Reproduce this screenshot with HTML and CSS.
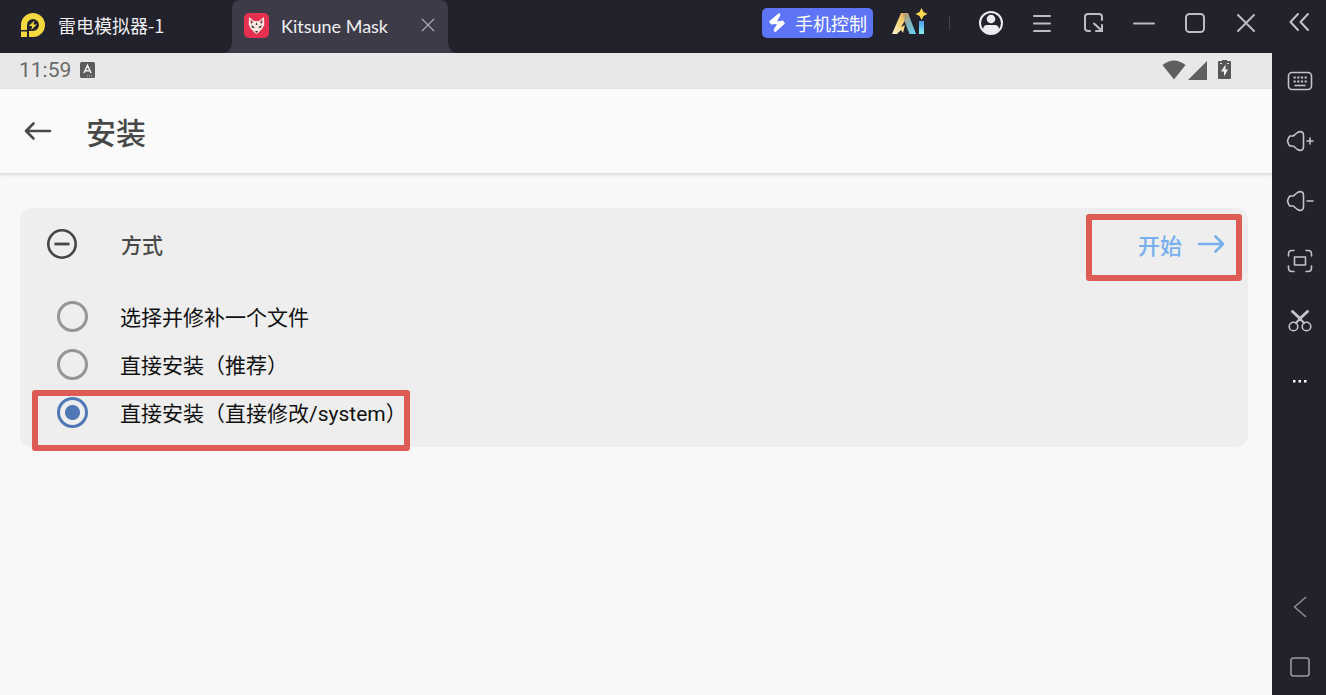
FILE: index.html
```html
<!DOCTYPE html>
<html lang="zh-CN">
<head>
  <meta charset="UTF-8">
  <meta name="viewport" content="width=device-width, initial-scale=1.0">
  <title>雷电模拟器-1</title>
  <link rel="stylesheet" href="styles.css">
</head>
<body>

<div class="window">
  <header class="titlebar">
    <div class="brand">
      <svg width="25" height="25" viewBox="0 0 25 25">
        <path d="M1 17V12A12 12 0 1 1 13 24H9V18H13A6 6 0 1 0 7 12V17Z" fill="#f5d93f"/>
        <path d="M1 18.5H7V24H1Z" fill="#f5d93f"/>
        <path d="M14.5 7.5L8.8 13H12.2L11.2 17L16.8 11.4H13.3Z" fill="#f5d93f"/>
      </svg>
      <span>雷电模拟器-1</span>
    </div>
    <div class="tab">
      <svg width="25" height="25" viewBox="0 0 25 25">
        <rect width="25" height="25" rx="5" fill="#e5304f"/>
        <path d="M5 4L10 8H15L20 4L20.300 12L18 16L14 20L12.500 21L11 20L7 16L4.700 12Z" fill="#f8e6df"/>
        <path d="M6.500 6.500L9 9L7 11ZM18.500 6.500L16 9L18 11Z" fill="#773342"/>
        <path d="M7 12L11 14.500L8.500 15ZM18 12L14 14.500L16.500 15ZM11 18H14L12.500 20ZM12.500 9L11.700 12H13.300Z" fill="#33222c"/>
      </svg>
      <span class="tab-name">Kitsune Mask</span>
      <button type="button" class="tab-close" aria-label="关闭标签">
        <svg width="14" height="14" viewBox="0 0 14 14"><path d="M1 1L13 13M13 1L1 13" stroke="#a9a8b0" stroke-width="1.200"/></svg>
      </button>
    </div>
    <div class="tools">
      <button type="button" class="phone">
        <svg width="18" height="22" viewBox="0 0 18 22"><path d="M11 1L1 9.500L3 12.500L9 12L5.500 18L7 20.500L17 11.500L15 8.500L9 9.500L12.500 3Z" fill="#fff"/></svg>
        手机控制
      </button>
      <button type="button" class="ai" aria-label="AI">
        <svg width="38" height="28" viewBox="0 0 38 28">
          <defs>
            <linearGradient id="warm" x1="0" y1="1" x2="1" y2="0"><stop offset="0" stop-color="#fff5da"/><stop offset=".5" stop-color="#f6d577"/><stop offset="1" stop-color="#d99b59"/></linearGradient>
            <linearGradient id="cool" x1="0" y1="0" x2="1" y2="1"><stop offset="0" stop-color="#d49a5e"/><stop offset=".5" stop-color="#7cb4bd"/><stop offset="1" stop-color="#68d9f5"/></linearGradient>
            <linearGradient id="bar" x1="0" y1="0" x2="0" y2="1"><stop offset="0" stop-color="#4a9cf0"/><stop offset="1" stop-color="#8af0e8"/></linearGradient>
          </defs>
          <path d="M10 5H17L19 12L15 11L10 19L14 17L12 25L10 22L6 26H1Z" fill="url(#warm)"/>
          <path d="M12 5H17L25 26H18.500L13 12Z" fill="url(#cool)"/>
          <rect x="28" y="13" width="5" height="13" fill="url(#bar)"/>
          <path d="M30.500 0L32.500 4L36.500 6L32.500 8L30.500 12L28.500 8L24.500 6L28.500 4Z" fill="#ffd84d"/>
        </svg>
      </button>
      <span class="divider"></span>
      <button type="button" class="win" aria-label="账号">
        <svg width="26" height="26" viewBox="0 0 26 26"><circle cx="13" cy="13" r="11" stroke="#ececf0"/><g fill="#ececf0" stroke="none"><circle cx="13" cy="9" r="4.300"/><path d="M5 20Q5 15 9 15H17Q21 15 21 20Q18 23.500 13 23.500Q8 23.500 5 20Z"/></g></svg>
      </button>
      <button type="button" class="win" aria-label="菜单">
        <svg width="20" height="20" viewBox="0 0 20 20"><path d="M2 3H18M2 10.500H18M2 18H18"/></svg>
      </button>
      <button type="button" class="win" aria-label="小窗">
        <svg width="22" height="22" viewBox="0 0 22 22"><path d="M8 19H6Q3 19 3 16V5Q3 2 6 2H17Q20 2 20 5V8M12 11.500L19 18M20 13V19H14"/></svg>
      </button>
      <button type="button" class="win" aria-label="最小化">
        <svg width="24" height="24" viewBox="0 0 24 24"><path d="M2 12.500H22"/></svg>
      </button>
      <button type="button" class="win" aria-label="最大化">
        <svg width="22" height="22" viewBox="0 0 22 22"><rect x="2" y="2" width="18" height="18" rx="3.500"/></svg>
      </button>
      <button type="button" class="win" aria-label="关闭">
        <svg width="20" height="20" viewBox="0 0 20 20"><path d="M2 2L18 18M18 2L2 18"/></svg>
      </button>
    </div>
  </header>

  <main class="screen">
    <div class="status">
      <span class="clock">11:59</span>
      <svg width="16" height="16" viewBox="0 0 16 16">
        <rect x="1" width="15" height="16" rx="1.500" fill="#5c5c5c"/>
        <path d="M5 11L8.500 3.500L12 11M6.300 8.700H10.700" fill="none" stroke="#eee" stroke-width="1.600"/>
        <path d="M8 14H14" stroke="#bbb" stroke-dasharray="1 1"/>
      </svg>
      <div class="signals">
        <svg width="24" height="20" viewBox="0 0 24 20"><path d="M0.500 5Q12 -4 23.500 5L12 19.500Z" fill="#5f5f5f"/></svg>
        <svg width="20" height="20" viewBox="0 0 20 20"><path d="M0 20L19 1V20Z" fill="#5f5f5f"/></svg>
        <svg class="battery" width="13" height="20" viewBox="0 0 13 20"><path d="M4 0H9V1H12Q13 1 13 2V18Q13 19 12 19H1Q0 19 0 18V2Q0 1 1 1H4Z" fill="#565656"/><path d="M7.500 4.500L3 11.500H6V16.500L10 9.500H7.500Z" fill="#efefef"/><path d="M2 3.500H4M9 3.500H11" stroke="#ddd"/></svg>
      </div>
    </div>

    <div class="appbar">
      <button type="button" class="back" aria-label="返回">
        <svg width="28" height="20" viewBox="0 0 28 20"><path d="M26 10H2M9.500 2.500L2 10L9.500 17.500" fill="none" stroke="#4a4a4a" stroke-width="2.600" stroke-linecap="round" stroke-linejoin="round"/></svg>
      </button>
      <h1>安装</h1>
    </div>

    <form class="card">
      <div class="card-head">
        <svg width="32" height="32" viewBox="0 0 32 32"><circle cx="16" cy="16" r="13.700" fill="none" stroke="#454545" stroke-width="2.600"/><path d="M8.500 16H23.500" stroke="#454545" stroke-width="2.800"/></svg>
        <h2>方式</h2>
        <button type="button" class="start">
          开始
          <svg width="28" height="20" viewBox="0 0 28 20"><path d="M2 10H26M18.500 2.500L26 10L18.500 17.500" fill="none" stroke="#76aeee" stroke-width="2.600" stroke-linecap="round" stroke-linejoin="round"/></svg>
        </button>
        <span class="mark mark-start"></span>
      </div>
      <div class="options">
        <label class="option"><input type="radio" name="method">选择并修补一个文件</label>
        <label class="option"><input type="radio" name="method">直接安装（推荐）</label>
        <label class="option"><input type="radio" name="method" checked>直接安装（直接修改/system）<span class="mark mark-option"></span></label>
      </div>
    </form>
  </main>
</div>

<aside class="sidebar">
  <button type="button" class="collapse" aria-label="收起">
    <svg width="22" height="20" viewBox="0 0 22 20"><path d="M9 2L1.500 10L9 18M19 2L11.500 10L19 18" stroke-width="2"/></svg>
  </button>
  <button type="button" aria-label="键盘">
    <svg width="26" height="20" viewBox="0 0 26 20"><rect x="1.500" y="1.500" width="23" height="17" rx="3.500"/><path d="M6.500 6.500H20M6.500 10.500H20" stroke-width="2.200" stroke-dasharray="2.200 1.500" stroke-linecap="butt"/><path d="M8 14.500H18"/></svg>
  </button>
  <button type="button" aria-label="音量加">
    <svg width="28" height="22" viewBox="0 0 28 22"><path d="M4 6H6.500Q8 6 9 4.500L11.500 2.500Q14 1 16 2Q17.500 3 17.500 5V17Q17.500 19 16 20Q14 21 11.500 19.500L9 17.500Q8 16 6.500 16H4Q2.500 15 1.500 11Q2.500 7 4 6ZM21 11H27M24 8V14"/></svg>
  </button>
  <button type="button" aria-label="音量减">
    <svg width="28" height="22" viewBox="0 0 28 22"><path d="M4 6H6.500Q8 6 9 4.500L11.500 2.500Q14 1 16 2Q17.500 3 17.500 5V17Q17.500 19 16 20Q14 21 11.500 19.500L9 17.500Q8 16 6.500 16H4Q2.500 15 1.500 11Q2.500 7 4 6ZM21 11H27"/></svg>
  </button>
  <button type="button" aria-label="全屏">
    <svg width="26" height="24" viewBox="0 0 26 24"><path d="M1.500 7V5Q1.500 1.500 5 1.500H7M19 1.500H21Q24.500 1.500 24.500 5V7M24.500 17V19Q24.500 22.500 21 22.500H19M7 22.500H5Q1.500 22.500 1.500 19V17"/><rect x="7.500" y="8" width="11" height="8"/></svg>
  </button>
  <button type="button" aria-label="截图">
    <svg width="24" height="24" viewBox="0 0 24 24"><path d="M4.500 2.500L12 9.500M19.500 2.500L12 9.500" stroke-width="3"/><path d="M12 9.500L16 14M12 9.500L8 14" stroke-width="2"/><circle cx="5.500" cy="17.500" r="4.300"/><circle cx="18.500" cy="17.500" r="4.300"/></svg>
  </button>
  <button type="button" aria-label="更多">
    <svg width="14" height="4" viewBox="0 0 14 4"><path d="M0 1H2.500V3.500H0ZM5.500 1H8V3.500H5.500ZM11 1H13.500V3.500H11Z" fill="#fff" stroke="none"/></svg>
  </button>
  <button type="button" class="nav" aria-label="后退">
    <svg width="14" height="22" viewBox="0 0 14 22"><path d="M12.500 1.500L1.500 11L12.500 20.500" stroke="#8e8d96"/></svg>
  </button>
  <button type="button" aria-label="任务">
    <svg width="20" height="20" viewBox="0 0 20 20"><rect x="1" y="1" width="18" height="18" rx="2.500" stroke="#9a99a2"/></svg>
  </button>
</aside>

</body>
</html>
```
FILE: styles.css
```css
* { box-sizing: border-box; }
body {
  margin: 0;
  min-height: 100vh;
  display: flex;
  background: #22222d;
  font-family: Roboto, "Noto Sans CJK SC", sans-serif;
}
button { padding: 0; border: none; background: none; font-family: inherit; cursor: pointer; }
svg { display: block; flex: none; }
h1, h2 { margin: 0; font-weight: 500; color: #484848; }

.window { flex: 1; display: flex; flex-direction: column; }

/* title bar */
.titlebar { height: 53px; display: flex; color: #f0f0f3; }
.brand {
  width: 232px;
  padding: 0 0 3px 20px;
  display: flex;
  align-items: center;
  gap: 13px;
  font-family: "Noto Sans CJK SC", sans-serif;
  font-size: 18px;
}
.tab {
  position: relative;
  width: 216px;
  padding: 0 13px 3px 12px;
  display: flex;
  align-items: center;
  background: #3c3b47;
  border-radius: 8px 8px 0 0;
}
.tab::before, .tab::after {
  content: "";
  position: absolute;
  bottom: 0;
  width: 8px;
  height: 12px;
}
.tab::before { right: 100%; background: radial-gradient(ellipse 8px 12px at 0 0, transparent 98%, #3c3b47); }
.tab::after { left: 100%; background: radial-gradient(ellipse 8px 12px at 100% 0, transparent 98%, #3c3b47); }
.tab-name { margin-left: 12px; padding-top: 2px; font-family: Lato, sans-serif; font-size: 18px; }
.tab-close { margin-left: auto; }
.tools { height: 45px; margin-left: auto; padding-right: 1px; display: flex; align-items: center; }
.phone {
  height: 30px;
  padding: 0 6px;
  display: flex;
  align-items: center;
  gap: 9px;
  border-radius: 5px;
  background: #5c74f5;
  color: #fff;
  font-size: 18px;
}
.ai { margin-left: 18px; padding-bottom: 2px; }
.divider { width: 1px; height: 14px; margin: 0 15px 0 20px; background: #44434f; }
.win { width: 51px; height: 45px; display: flex; align-items: center; justify-content: center; }
.win svg { fill: none; stroke: #bdbcc3; stroke-width: 2; stroke-linecap: round; }

/* android screen */
.screen { flex: 1; background: #f8f8f8; }
.status { height: 36px; padding: 0 41px 2px 19px; display: flex; align-items: center; gap: 8px; background: #e8e8e8; }
.clock { font-size: 21px; color: #6a6a6a; }
.signals { margin-left: auto; display: flex; gap: 2px; }
.battery { margin-left: 8px; }
.appbar {
  height: 85px;
  padding: 0 0 1px 24px;
  display: flex;
  align-items: center;
  gap: 34px;
  background: #fafafa;
  border-bottom: 1px solid #dedede;
  box-shadow: 0 1px 3px rgba(0, 0, 0, 0.12);
}
.appbar h1 { font-size: 30px; }

.card { margin: 34px 24px 0 20px; padding-bottom: 11px; background: #eeeeee; border-radius: 12px; }
.card-head { position: relative; height: 74px; padding: 0 23px 2px 26px; display: flex; align-items: center; }
.card-head h2 { margin-left: 43px; font-size: 21px; }
.start { margin-left: auto; display: flex; align-items: center; gap: 15px; font-size: 22px; font-weight: 500; color: #76aeee; }
.options { padding-top: 10px; }
.option {
  position: relative;
  height: 48px;
  padding-left: 37px;
  display: flex;
  align-items: center;
  font-size: 21px;
  color: #111;
}
.option input {
  appearance: none;
  width: 31px;
  height: 31px;
  margin: 0 32px 0 0;
  border: 3px solid #969696;
  border-radius: 50%;
}
.option input:checked { border-color: #4f78b4; background: radial-gradient(circle, #4f78b4 7px, transparent 8px); }

/* red frames */
.mark { position: absolute; border: 6px solid #de5b55; border-radius: 3px; pointer-events: none; }
.mark-start { top: 6px; right: 6px; width: 156px; height: 67px; }
.mark-option { top: 2px; left: 12px; width: 378px; height: 61px; }

/* side toolbar */
.sidebar { width: 54px; padding-left: 2px; display: flex; flex-direction: column; gap: 4px; }
.sidebar button { height: 56px; display: flex; align-items: center; justify-content: center; }
.sidebar svg { fill: none; stroke: #c4c3ca; stroke-width: 1.6; stroke-linecap: round; stroke-linejoin: round; }
.sidebar .collapse { height: 44px; margin-bottom: 5px; }
.sidebar .nav { margin-top: auto; }
```
